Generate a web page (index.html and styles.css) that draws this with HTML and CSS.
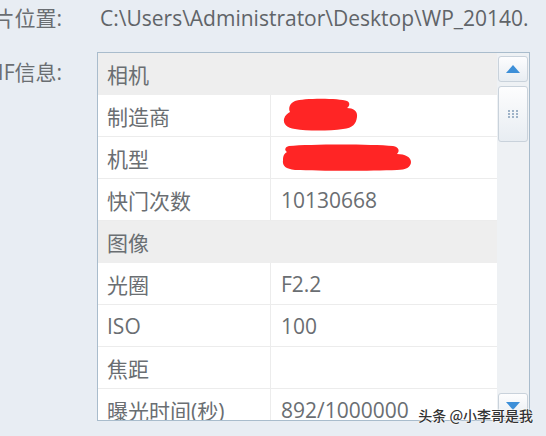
FILE: index.html
```html
<!DOCTYPE html>
<html lang="zh-CN">
<head>
<meta charset="utf-8">
<link rel="stylesheet" href="styles.css">
</head>
<body>
<div class="page">
  <div class="field">
    <span class="label"><span>图片位置:</span></span>
    <span class="path">C:\Users\Administrator\Desktop\WP_20140.</span>
  </div>
  <div class="field exif">
    <span class="label label-box"><span>EXIF信息:</span></span>
    <div class="box">
      <div class="grid">
        <div class="row group"><span class="key">相机</span></div>
        <div class="row"><span class="key">制造商</span><span class="val">
          <svg class="redact" width="80" height="36" viewBox="0 0 80 36"><path d="M14 3 C22 0 58 0 66 3 C70 5 68 9 66 10 C72 10 77 13 76 19 C75 26 72 30 62 31 C48 33 26 33 14 31 C6 30 2 26 3 21 C4 17 7 15 9 14 C7 10 9 5 14 3 Z" fill="#ff2525"/></svg>
        </span></div>
        <div class="row"><span class="key">机型</span><span class="val">
          <svg class="redact" width="132" height="28" viewBox="0 0 132 28"><path d="M8 2 C30 0 90 0 112 2 C118 3 119 7 116 10 C124 10 130 13 130 18 C130 23 125 26 116 26 C90 27 40 27 14 26 C5 25 1 22 2 16 C2 11 4 9 6 8 C3 6 4 3 8 2 Z" fill="#ff2525"/></svg>
        </span></div>
        <div class="row"><span class="key">快门次数</span><span class="val">10130668</span></div>
        <div class="row group"><span class="key">图像</span></div>
        <div class="row"><span class="key">光圈</span><span class="val">F2.2</span></div>
        <div class="row"><span class="key">ISO</span><span class="val">100</span></div>
        <div class="row"><span class="key">焦距</span><span class="val"></span></div>
        <div class="row"><span class="key">曝光时间(秒)</span><span class="val">892/1000000</span></div>
      </div>
      <div class="scrollbar">
        <div class="sb-btn"><svg width="14" height="8" viewBox="0 0 14 8"><path d="M7 0 L14 8 L0 8 Z" fill="#3d8fd8"/></svg></div>
        <div class="sb-thumb"><svg width="10" height="8" viewBox="0 0 10 8" fill="#9fb3c8"><rect x="0" y="0" width="2" height="2"/><rect x="4" y="0" width="2" height="2"/><rect x="8" y="0" width="2" height="2"/><rect x="0" y="3" width="2" height="2"/><rect x="4" y="3" width="2" height="2"/><rect x="8" y="3" width="2" height="2"/><rect x="0" y="6" width="2" height="2"/><rect x="4" y="6" width="2" height="2"/><rect x="8" y="6" width="2" height="2"/></svg></div>
        <div class="sb-track"></div>
        <div class="sb-btn"><svg width="14" height="8" viewBox="0 0 14 8"><path d="M0 0 L14 0 L7 8 Z" fill="#3d8fd8"/></svg></div>
      </div>
    </div>
  </div>
  <div class="watermark">头条 @小李哥是我</div>
</div>
</body>
</html>
```
FILE: styles.css
```css
html, body {
  margin: 0;
  padding: 0;
  background: #e8edf3;
  overflow: hidden;
}
.page {
  position: relative;
  width: 546px;
  height: 436px;
  padding-top: 4px;
  box-sizing: border-box;
  font-family: "Open Sans", "Noto Sans CJK SC", sans-serif;
  font-size: 21px;
  color: #6a6e72;
}
.field {
  display: grid;
  grid-template-columns: 62px 1fr;
  column-gap: 35px;
  align-items: start;
}
.label {
  white-space: nowrap;
  line-height: 28px;
  display: flex;
  justify-content: flex-end;
}
.path {
  line-height: 28px;
  white-space: nowrap;
  padding-left: 3px;
  color: #606468;
}
.exif {
  margin-top: 20px;
}
.label-box {
  line-height: 40px;
}
.box {
  width: 433px;
  height: 369px;
  box-sizing: border-box;
  border: 1px solid #a9bccc;
  background: #eef1f4;
  display: flex;
  overflow: hidden;
}
.grid {
  width: 399px;
  flex: none;
  background: #ffffff;
}
.row {
  height: 42px;
  box-sizing: border-box;
  border-bottom: 1px solid #ececec;
  display: grid;
  grid-template-columns: 173px 1fr;
  align-items: center;
  white-space: nowrap;
}
.row.group {
  background: #eeeeee;
  border-bottom-color: #eeeeee;
  grid-template-columns: 1fr;
}
.row.group .key {
  border-right: none;
}
.key {
  padding-left: 9px;
  height: 100%;
  display: flex;
  align-items: center;
  border-right: 1px solid #ececec;
  box-sizing: border-box;
}
.val {
  padding-left: 10px;
  display: flex;
  align-items: center;
  height: 100%;
}
.redact {
  display: block;
}
.scrollbar {
  flex: 1;
  display: flex;
  flex-direction: column;
  padding: 3px 1px 1px 1px;
  gap: 4px;
}
.sb-btn, .sb-thumb {
  box-sizing: border-box;
  border: 1px solid #c9d2db;
  border-radius: 3px;
  background: linear-gradient(#fdfdfe, #e8edf2);
  display: flex;
  align-items: center;
  justify-content: center;
}
.sb-btn {
  height: 26px;
}
.sb-thumb {
  height: 56px;
}
.sb-track {
  flex: 1;
}
.watermark {
  position: absolute;
  right: 13px;
  bottom: 11px;
  font-family: "Noto Sans CJK SC", sans-serif;
  font-size: 14px;
  font-weight: 500;
  color: #333333;
  text-shadow: 0 0 2px #ffffff, 0 0 2px #ffffff, 0 0 1px #ffffff;
  white-space: nowrap;
}
```
